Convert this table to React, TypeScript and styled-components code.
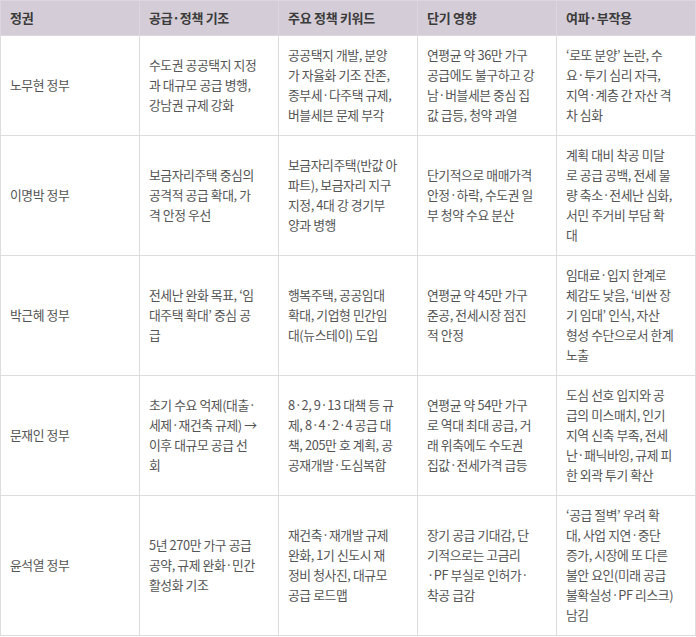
import React from "react";
import styled, { createGlobalStyle } from "styled-components";

const GlobalStyle = createGlobalStyle`
  html, body { margin: 0; padding: 0; background: #ffffff; }
  body { font-family: "Noto Sans CJK KR", "Noto Sans", sans-serif; }
`;

const Table = styled.table`
  width: 696px;
  border-collapse: collapse;
  table-layout: fixed;
  background: #ffffff;
`;

const HeadCell = styled.th`
  background: #d4ccd6;
  color: #3b3b3b;
  font-size: 13px;
  font-weight: 700;
  letter-spacing: -0.3px;
  text-align: left;
  line-height: 20px;
  height: 35px;
  padding: 0 9px;
  border: 1px solid #dcd6de;
  box-sizing: border-box;
`;

const Cell = styled.td`
  color: #545454;
  font-size: 12.8px;
  letter-spacing: -0.4px;
  line-height: 20px;
  padding: 9px 9px 10px;
  vertical-align: middle;
  border: 1px solid #dddddd;
  white-space: nowrap;
  overflow: hidden;
`;

const Line = styled.span`
  display: block;
`;

type Row = { name: string; cols: string[][] };

const headers = ["정권", "공급·정책 기조", "주요 정책 키워드", "단기 영향", "여파·부작용"];

const rows: Row[] = [
  {
    name: "노무현 정부",
    cols: [
      ["수도권 공공택지 지정", "과 대규모 공급 병행,", "강남권 규제 강화"],
      ["공공택지 개발, 분양", "가 자율화 기조 잔존,", "종부세·다주택 규제,", "버블세븐 문제 부각"],
      ["연평균 약 36만 가구", "공급에도 불구하고 강", "남·버블세븐 중심 집", "값 급등, 청약 과열"],
      ["‘로또 분양’ 논란, 수", "요·투기 심리 자극,", "지역·계층 간 자산 격", "차 심화"],
    ],
  },
  {
    name: "이명박 정부",
    cols: [
      ["보금자리주택 중심의", "공격적 공급 확대, 가", "격 안정 우선"],
      ["보금자리주택(반값 아", "파트), 보금자리 지구", "지정, 4대 강 경기부", "양과 병행"],
      ["단기적으로 매매가격", "안정·하락, 수도권 일", "부 청약 수요 분산"],
      ["계획 대비 착공 미달", "로 공급 공백, 전세 물", "량 축소·전세난 심화,", "서민 주거비 부담 확", "대"],
    ],
  },
  {
    name: "박근혜 정부",
    cols: [
      ["전세난 완화 목표, ‘임", "대주택 확대’ 중심 공", "급"],
      ["행복주택, 공공임대", "확대, 기업형 민간임", "대(뉴스테이) 도입"],
      ["연평균 약 45만 가구", "준공, 전세시장 점진", "적 안정"],
      ["임대료·입지 한계로", "체감도 낮음, ‘비싼 장", "기 임대’ 인식, 자산", "형성 수단으로서 한계", "노출"],
    ],
  },
  {
    name: "문재인 정부",
    cols: [
      ["초기 수요 억제(대출·", "세제·재건축 규제) →", "이후 대규모 공급 선", "회"],
      ["8·2, 9·13 대책 등 규", "제, 8·4·2·4 공급 대", "책, 205만 호 계획, 공", "공재개발·도심복합"],
      ["연평균 약 54만 가구", "로 역대 최대 공급, 거", "래 위축에도 수도권", "집값·전세가격 급등"],
      ["도심 선호 입지와 공", "급의 미스매치, 인기", "지역 신축 부족, 전세", "난·패닉바잉, 규제 피", "한 외곽 투기 확산"],
    ],
  },
  {
    name: "윤석열 정부",
    cols: [
      ["5년 270만 가구 공급", "공약, 규제 완화·민간", "활성화 기조"],
      ["재건축·재개발 규제", "완화, 1기 신도시 재", "정비 청사진, 대규모", "공급 로드맵"],
      ["장기 공급 기대감, 단", "기적으로는 고금리", "·PF 부실로 인허가·", "착공 급감"],
      ["‘공급 절벽’ 우려 확", "대, 사업 지연·중단", "증가, 시장에 또 다른", "불안 요인(미래 공급", "불확실성·PF 리스크)", "남김"],
    ],
  },
];

export default function App() {
  return (
    <>
      <GlobalStyle />
      <Table>
        <thead>
          <tr>
            {headers.map((h) => (
              <HeadCell key={h}>{h}</HeadCell>
            ))}
          </tr>
        </thead>
        <tbody>
          {rows.map((r) => (
            <tr key={r.name}>
              <Cell>{r.name}</Cell>
              {r.cols.map((c, i) => (
                <Cell key={i}>
                  {c.map((l, j) => (
                    <Line key={j}>{l}</Line>
                  ))}
                </Cell>
              ))}
            </tr>
          ))}
        </tbody>
      </Table>
    </>
  );
}
